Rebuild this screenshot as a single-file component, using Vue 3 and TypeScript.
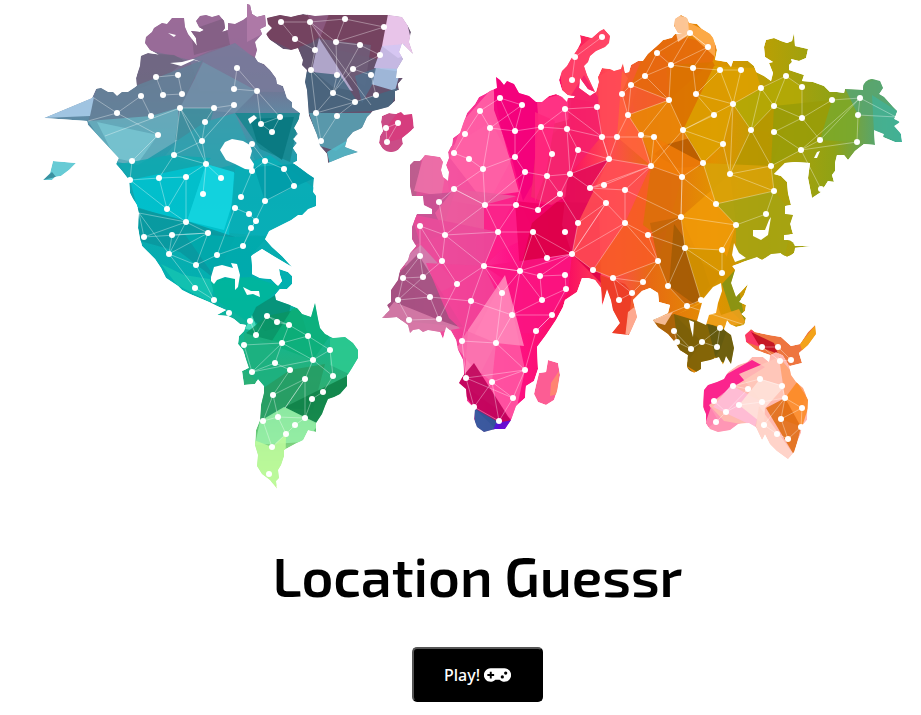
<script setup lang="ts">
interface Facet {
  fill: string
  points: string
}

interface Land {
  id: string
  fill: string
  outline: string
  facets: Facet[]
}

const lands: Land[] = [
  {
    id: 'americas',
    fill: 'url(#americas-fill)',
    outline:
      '44,118 92,98 96,89 101,88 108,92 113,92 117,96 122,92 128,92 137,86 136,78 140,66 141,56 148,53 155,54 159,55 150,50 145,43 146,37 152,32 154,28 162,23 167,24 172,18 184,18 185,27 188,34 194,42 197,46 196,38 191,31 200,32 204,30 199,27 196,21 200,16 206,15 212,17 219,15 224,21 225,28 222,32 228,30 228,23 235,24 243,20 247,17 247,4 250,5 252,14 257,17 265,15 266,26 260,29 262,34 255,42 257,50 255,57 258,62 264,64 270,70 276,78 277,84 283,86 287,98 292,102 292,107 300,113 299,119 294,128 298,134 293,139 297,143 293,148 297,154 297,161 293,163 300,168 308,174 314,178 313,192 316,196 316,206 308,209 305,212 302,215 298,215 291,220 277,227 269,231 265,239 272,247 282,256 292,267 275,257 262,249 251,256 252,266 252,274 260,278 271,279 278,286 282,281 280,275 279,269 288,272 292,276 292,284 287,289 280,289 275,295 276,300 290,305 297,308 302,314 311,317 315,303 318,319 320,328 325,334 333,338 345,337 353,343 358,350 358,358 352,368 347,376 347,386 340,394 334,397 328,399 325,406 322,414 316,423 316,432 308,430 303,440 295,444 284,450 284,456 281,465 278,470 279,478 276,481 277,489 270,480 262,474 257,466 258,455 255,445 256,430 260,420 261,405 264,393 264,386 258,379 255,384 244,385 242,371 249,368 247,362 243,350 238,344 239,336 244,331 246,325 240,324 234,319 228,316 217,315 226,310 217,306 209,302 190,294 182,290 178,286 166,278 161,268 155,259 148,252 142,246 140,238 138,228 139,213 137,205 133,199 130,193 129,180 122,171 116,164 119,158 88,125 87,121',
    facets: [
      { fill: '#9b6b98', points: '140,10 250,0 270,10 262,60 225,44 190,60 140,48' },
      { fill: '#825f83', points: '191,30 225,18 230,45 194,55' },
      { fill: '#b07ba8', points: '247,0 270,10 270,30 247,42' },
      { fill: '#6e6681', points: '140,53 174,55 185,61 162,80 135,90' },
      { fill: '#777b9b', points: '190,60 235,43 270,70 285,92 200,91' },
      { fill: '#647f97', points: '135,86 203,60 180,108 145,125 88,122 97,88' },
      { fill: '#7190a8', points: '203,62 257,91 235,113 180,108' },
      { fill: '#a9cdea', points: '44,118 94,97 90,116' },
      { fill: '#67adbd', points: '88,121 151,116 178,108 178,140 138,165 115,162' },
      { fill: '#78c4d0', points: '97,122 158,135 138,163 115,158' },
      { fill: '#3d8e9d', points: '180,108 214,108 205,141 175,140' },
      { fill: '#32a0ae', points: '205,122 235,113 255,160 210,170 165,156 178,140' },
      { fill: '#16888f', points: '235,113 300,113 290,162 260,149' },
      { fill: '#08777f', points: '250,119 294,117 282,160 257,142' },
      { fill: '#10a8b0', points: '120,164 170,155 211,158 188,177 130,180' },
      { fill: '#00c3cf', points: '130,180 206,164 235,173 229,237 137,207' },
      { fill: '#15d5e0', points: '206,164 234,172 233,201 224,230 187,221' },
      { fill: '#08aeb7', points: '235,168 270,155 317,190 315,210 267,236 229,233' },
      { fill: '#009ca8', points: '254,167 295,164 315,178 294,187 265,201' },
      { fill: '#09979e', points: '137,208 187,221 235,237 215,279 180,252 140,241' },
      { fill: '#00aaac', points: '184,233 235,237 268,236 252,254 252,280 216,279' },
      { fill: '#14c3b0', points: '161,264 184,275 216,280 210,302 177,285' },
      { fill: '#00b59b', points: '210,279 252,277 280,286 248,322 216,300' },
      { fill: '#078f75', points: '256,307 277,294 291,303 287,325 265,331 251,318' },
      { fill: '#53e0c4', points: '245,329 252,315 258,331' },
      { fill: '#0a9464', points: '267,316 300,309 308,336 275,348 246,333' },
      { fill: '#0caf7a', points: '292,309 317,302 329,337 313,360 270,344' },
      { fill: '#2cca90', points: '330,338 365,335 355,377 330,365' },
      { fill: '#1cb080', points: '244,333 282,343 275,364 305,379 273,395 246,372' },
      { fill: '#279c63', points: '262,389 290,370 325,364 313,410 285,408 260,422' },
      { fill: '#0f8248', points: '285,407 347,376 348,390 316,424' },
      { fill: '#97f0a8', points: '260,421 284,407 319,424 305,442 255,445' },
      { fill: '#bdfb9c', points: '254,440 272,447 286,434 285,490 255,475' }
    ]
  },
  {
    id: 'aleutian',
    fill: '#67cbd5',
    outline: '43,180 50,173 53,161 76,163 69,170 61,176 55,177 52,180',
    facets: [{ fill: '#348998', points: '43,180 52,172 56,177' }]
  },
  {
    id: 'greenland',
    fill: '#65526e',
    outline:
      '267,18 280,15 291,17 303,14 315,16 330,15 388,15 402,17 408,26 411,32 409,42 413,54 402,43 399,52 403,59 397,69 396,78 403,78 398,84 399,90 395,91 395,101 388,107 373,111 367,117 362,128 353,132 347,139 345,147 358,152 345,156 328,163 327,154 320,146 317,135 309,116 307,90 305,82 307,70 302,65 303,60 298,48 291,50 283,49 276,44 270,40 266,34 272,28 268,24',
    facets: [
      { fill: '#76415e', points: '265,14 310,15 319,37 298,53 267,38' },
      { fill: '#8e5880', points: '307,14 330,15 320,39' },
      { fill: '#77415f', points: '329,14 390,14 381,60 330,48 320,38' },
      { fill: '#61546f', points: '299,47 320,40 315,72 301,70' },
      { fill: '#705d79', points: '320,39 371,45 365,86 340,72' },
      { fill: '#b9b0d6', points: '319,38 337,66 353,91 333,87 312,70' },
      { fill: '#fbd4fa', points: '388,14 406,18 414,53 398,58 382,46' },
      { fill: '#d3c6f2', points: '382,46 405,44 402,72 374,68' },
      { fill: '#a6c4e6', points: '375,68 401,69 395,91 371,84' },
      { fill: '#47667f', points: '302,71 340,75 357,101 398,88 390,110 307,114' },
      { fill: '#526f8d', points: '355,76 376,68 372,85 362,103' },
      { fill: '#58a2b4', points: '309,113 376,113 350,140 336,151 320,146' },
      { fill: '#53bccb', points: '327,152 353,137 360,153 330,165' }
    ]
  },
  {
    id: 'iceland',
    fill: '#cb4c87',
    outline:
      '382,116 389,113 396,114 401,112 404,115 412,114 414,128 407,134 402,138 403,144 398,150 391,152 383,149 379,143 380,136 383,131 381,122',
    facets: [{ fill: '#d73b7d', points: '386,128 398,112 416,113 410,137 387,142' }]
  },
  {
    id: 'old-world',
    fill: 'url(#old-world-fill)',
    outline:
      '410,165 414,161 420,161 425,155 440,157 443,162 441,170 443,177 448,181 449,172 446,165 449,158 448,152 452,145 453,138 460,133 463,124 467,113 475,104 479,97 485,94 490,91 497,88 496,77 500,80 504,85 507,81 514,84 519,93 529,96 536,102 542,102 549,96 556,94 562,97 567,102 568,98 574,98 575,96 568,95 562,90 559,80 562,71 567,66 571,59 577,50 581,42 580,35 592,38 600,31 604,29 610,36 609,43 605,47 596,51 590,56 588,62 584,66 587,75 595,92 588,89 580,78 579,88 590,96 596,92 599,82 598,77 602,68 610,69 614,71 621,69 623,63 625,73 629,72 631,65 638,61 643,61 648,54 656,47 663,40 672,38 675,34 684,34 678,33 674,26 675,19 681,15 687,18 689,23 697,24 702,29 710,34 713,38 717,50 715,60 727,62 731,67 733,61 748,61 754,66 756,72 764,76 771,81 773,73 769,63 773,62 765,57 764,47 766,40 774,38 781,41 787,43 792,41 794,33 795,46 808,49 806,58 799,61 791,59 792,62 789,65 789,70 804,75 802,81 813,82 824,86 830,92 837,92 844,93 845,89 863,90 864,84 871,79 880,81 883,88 879,94 884,97 893,107 897,111 894,119 900,122 894,126 901,134 902,142 895,142 883,137 884,134 874,130 875,145 864,144 855,151 848,160 844,155 837,155 835,163 835,171 832,175 834,182 828,181 821,192 812,198 808,178 810,163 795,162 785,163 774,174 781,176 787,182 788,193 791,205 785,206 785,214 793,215 790,224 793,234 784,235 784,240 791,241 794,246 811,246 794,248 794,253 787,257 781,253 771,254 762,260 757,257 748,260 738,264 732,266 735,270 731,283 736,297 748,284 744,295 739,302 746,305 745,311 741,314 746,318 744,325 736,327 730,324 727,320 724,330 731,335 734,348 731,364 726,356 723,365 719,357 710,360 701,362 701,369 694,373 687,367 688,355 680,350 674,341 668,334 658,327 653,320 668,313 670,305 659,302 658,293 650,288 642,291 633,300 637,317 629,335 612,333 620,323 613,310 611,300 607,289 602,306 601,288 595,280 588,278 582,278 577,292 565,300 563,307 556,320 546,335 537,347 538,369 534,381 526,386 525,398 516,406 511,420 505,429 495,429 484,432 477,427 474,419 475,409 467,401 466,389 459,383 464,374 463,360 458,350 456,340 451,331 446,327 443,339 440,332 428,330 423,332 419,329 413,330 410,333 408,325 397,317 382,318 390,310 387,305 391,302 391,290 398,280 400,270 408,260 410,253 416,246 412,239 412,227 417,214 432,214 432,209 424,205 423,196 412,196 410,186',
    facets: [
      { fill: '#b95f8d', points: '408,160 421,160 416,196 408,197' },
      { fill: '#ec72a9', points: '424,154 444,158 450,198 414,191' },
      { fill: '#f455a0', points: '450,147 491,122 511,160 486,207 441,199' },
      { fill: '#ff62a6', points: '463,121 493,87 502,132 519,192 480,197 450,158' },
      { fill: '#f3007b', points: '494,76 516,80 541,101 538,174 523,201 513,163 494,110' },
      { fill: '#ff3887', points: '537,101 572,91 570,118 540,146' },
      { fill: '#f4286f', points: '538,128 571,119 570,195 551,205 531,197' },
      { fill: '#ff257d', points: '535,112 555,121 546,173 535,202' },
      { fill: '#c65393', points: '421,195 455,192 440,236 411,246 411,214' },
      { fill: '#eb5d9e', points: '454,189 516,196 498,232 445,235 435,213' },
      { fill: '#fd1c87', points: '484,205 517,196 535,234 500,251 484,266' },
      { fill: '#f00066', points: '515,201 552,205 570,194 565,233 572,254 520,271' },
      { fill: '#dc0048', points: '532,223 557,202 599,203 601,283 572,254 544,262 520,271' },
      { fill: '#eb4b9b', points: '411,214 498,232 484,266 457,285 426,263' },
      { fill: '#d07fae', points: '421,245 457,284 430,297 407,274 404,258' },
      { fill: '#a05080', points: '418,254 463,327 384,319 394,278' },
      { fill: '#d67ca8', points: '380,319 394,302 412,309 439,320 462,328 410,337' },
      { fill: '#f14398', points: '426,263 484,266 501,302 466,334 449,318' },
      { fill: '#fb1382', points: '484,266 572,254 568,292 538,334 513,333 502,278' },
      { fill: '#ff58a3', points: '505,276 525,370 514,421 466,387 464,355' },
      { fill: '#ff86b9', points: '505,275 524,346 496,343 478,378 465,377 468,330' },
      { fill: '#fa70ae', points: '467,331 496,343 492,382 471,365 457,348' },
      { fill: '#bd0058', points: '474,363 511,421 498,431 474,408 457,383' },
      { fill: '#2060a0', points: '474,408 500,423 494,438 475,431' },
      { fill: '#5a0ce0', points: '496,423 512,420 505,433 492,433' },
      { fill: '#ff4468', points: '559,64 603,28 617,43 589,68 600,104 563,96' },
      { fill: '#f5206b', points: '568,100 584,75 598,97 601,137 570,174' },
      { fill: '#ff4958', points: '597,77 622,63 635,112 623,138 602,137' },
      { fill: '#ff633c', points: '622,71 637,89 628,115 641,135 651,166 617,137' },
      { fill: '#f45b2d', points: '622,92 634,65 665,53 669,100 628,115' },
      { fill: '#e56a0b', points: '644,54 674,35 717,45 713,61 669,100 631,85' },
      { fill: '#db7300', points: '671,65 713,62 733,104 714,115 683,130 669,100' },
      { fill: '#ffcfa8', points: '672,15 688,17 690,34 678,42' },
      { fill: '#ffad50', points: '688,22 716,36 715,57 689,33' },
      { fill: '#e98508', points: '628,115 669,100 683,130 654,166 641,135' },
      { fill: '#b75a00', points: '665,145 690,138 703,166 678,168 654,154' },
      { fill: '#f07c08', points: '654,137 703,163 682,177 651,166' },
      { fill: '#dca000', points: '714,66 755,68 761,88 733,104 723,144 703,163 683,130' },
      { fill: '#b3a806', points: '733,104 786,76 802,87 802,118 774,132 751,130' },
      { fill: '#b69600', points: '751,130 774,106 791,112 771,166 730,174' },
      { fill: '#999c08', points: '774,106 832,100 860,98 820,140 801,150 771,166' },
      { fill: '#7ba82b', points: '832,100 863,98 857,142 820,140' },
      { fill: '#59a56f', points: '845,88 884,78 900,118 858,115' },
      { fill: '#44b093', points: '872,95 897,111 902,144 874,132' },
      { fill: '#e30c58', points: '568,174 609,159 590,188 606,203 572,254 562,225' },
      { fill: '#ff4d54', points: '609,159 651,166 625,223 593,270 572,254 578,223' },
      { fill: '#f75c26', points: '625,223 651,166 682,177 658,261 613,278 593,270' },
      { fill: '#db7109', points: '651,166 682,177 681,217 658,236 643,225' },
      { fill: '#c46508', points: '681,217 702,263 722,275 701,300 687,306 668,286 658,261 650,223' },
      { fill: '#a35b05', points: '674,224 702,262 710,286 694,304 669,286' },
      { fill: '#f09a08', points: '681,217 730,174 736,225 722,273 685,248' },
      { fill: '#d7a208', points: '703,163 771,166 774,191 716,204' },
      { fill: '#a5a312', points: '716,204 774,191 794,215 785,256 736,262 736,225' },
      { fill: '#d59500', points: '685,248 722,250 736,269 722,285 701,300' },
      { fill: '#829315', points: '722,284 735,270 746,325 731,311' },
      { fill: '#ec3b24', points: '600,275 625,284 632,293 627,336 607,337' },
      { fill: '#ffb49d', points: '628,312 637,305 638,324 625,338' },
      { fill: '#a36108', points: '650,320 674,314 702,342 689,360 673,348' },
      { fill: '#766008', points: '674,314 727,330 720,350 702,375 680,362' },
      { fill: '#605911', points: '707,323 734,333 735,366 716,360' },
      { fill: '#efa11c', points: '676,315 705,300 702,323 725,327 746,323 739,309 721,315 715,297' },
      { fill: '#ffc5a5', points: '650,321 673,312 665,325' }
    ]
  },
  {
    id: 'madagascar',
    fill: '#fc5d94',
    outline:
      '548,360 558,363 560,375 557,391 554,400 546,405 538,402 534,394 536,385 539,373 546,372',
    facets: [{ fill: '#ff8b6d', points: '551,383 559,371 558,394 550,396' }]
  },
  {
    id: 'new-guinea',
    fill: '#ee753f',
    outline:
      '745,335 751,329 755,332 769,335 781,337 791,346 800,344 808,332 815,325 816,334 808,345 799,353 802,363 790,366 779,360 770,355 756,350 746,342',
    facets: [
      { fill: '#ff2f6c', points: '745,334 752,330 763,348 746,342' },
      { fill: '#c00a22', points: '751,332 774,343 778,354 760,347' },
      { fill: '#f4aa15', points: '800,344 818,322 818,334 803,353' }
    ]
  },
  {
    id: 'australia',
    fill: '#ffb9b0',
    outline:
      '704,390 708,385 717,382 724,379 728,372 738,365 747,362 752,357 763,357 769,362 770,355 776,352 783,355 789,365 791,375 796,382 803,388 808,400 807,420 802,426 801,433 798,440 794,452 788,459 777,451 770,444 765,434 762,440 756,427 749,423 738,424 730,430 718,432 710,429 706,423 706,414 703,407',
    facets: [
      { fill: '#fb0f88', points: '702,388 752,360 765,367 730,389 709,405 718,420 705,430' },
      { fill: '#ffbcd8', points: '731,385 762,402 755,427 713,407' },
      { fill: '#ff91b5', points: '711,407 724,421 758,427 735,443 703,430' },
      { fill: '#ffc7b9', points: '739,374 779,357 785,398 762,402' },
      { fill: '#ffe2d9', points: '739,405 760,379 785,386 765,408 764,425' },
      { fill: '#ffa26e', points: '779,357 807,390 802,408 785,398' },
      { fill: '#fc8a22', points: '785,398 797,382 810,402 802,427 781,419' },
      { fill: '#e06c12', points: '766,408 785,398 801,427 794,455' },
      { fill: '#ffd6cc', points: '759,406 794,455 786,462 755,432' }
    ]
  }
]

const waters: string[] = [
  '220,150 225,142 232,139 243,141 250,145 252,151 250,158 254,164 253,170 245,169 235,164 226,160',
  '211,277 214,267 222,265 233,268 231,263 237,264 240,275 238,287 235,290 235,279 225,277 217,280 214,284 211,281',
  '243,287 251,291 259,291 260,297 253,294 247,295',
  '168,33 176,35 174,37',
  '170,63 182,62 193,59 201,62 194,60 181,66',
  '248,119 254,115 257,118 250,124',
  '703,299 713,287 721,283 722,291 718,303 716,313 709,315 706,325 697,321',
  '689,320 694,322 693,337 691,330',
  '753,230 765,230 769,220 771,217 768,235 761,240 753,236',
  '817,152 820,151 817,158 814,158',
  '734,243 739,253 746,258 735,262 732,255'
]

const nodes: string[] = [
  // North America
  '156,77 178,75 163,95 182,94 141,96 117,113 151,116 180,108 214,108 205,122 158,135 202,141 174,155 206,164 132,161 130,180 159,178 186,177 221,178 203,194 237,68 234,89 257,91 234,105 280,117 261,124 272,132 252,144 265,161 252,171 284,169 294,186 241,197 265,201',
  '167,209 235,208 249,214 256,221 251,228 186,222 144,237 172,235 208,233 169,254 217,255 243,246 196,265 195,288 214,300 229,313',
  // South America
  '250,321 267,316 277,322 289,325 244,345 256,335 282,343 308,336 330,350 252,372 275,363 290,370 313,360 305,379 333,376 273,395 312,399 323,392 263,421 278,417 295,425 305,418 286,434 272,447 269,474',
  // Greenland and Iceland
  '281,22 310,22 345,19 384,27 295,39 336,42 360,45 315,50 380,55 311,70 337,75 353,69 371,75 333,93 355,102 376,95 316,113 337,116 321,141 386,128 398,123 387,142',
  // Europe
  '500,98 522,105 480,111 490,128 515,131 465,134 454,153 469,159 483,169 515,157 541,127 565,109 567,129 552,154 578,150 525,172 547,176 570,174 454,189 439,202 485,205 516,205 538,210 560,194 420,226 445,235 498,232 533,232 565,232 578,223 572,254 547,258',
  // Africa
  '420,256 442,261 484,266 520,271 403,278 423,277 457,284 398,300 430,297 409,320 439,319 471,301 502,293 540,276 542,300 565,275 566,289 552,315 536,331 512,315 462,341 496,343 525,370 466,378 492,382 513,398 474,407 499,421',
  // Asia
  '602,37 575,57 572,80 597,107 602,137 617,137 609,159 590,188 604,185 625,190 622,94 631,85 645,76 628,115 657,53 671,65 690,33 708,47 693,68 720,70 741,70 669,100 696,94 733,104 714,115 641,135 654,137 683,130 723,144 651,166 703,163 730,174 682,177 761,88 786,76 802,87 774,106 802,118 751,130 774,132 832,100 860,98 858,115 857,142 820,140 801,150 771,166 774,191 766,214 821,189',
  '716,204 681,217 736,225 648,235 625,223 606,203 685,248 722,250 658,261 722,273 593,270 613,278 643,282 632,293 668,286 701,300 619,300 687,306 674,331 677,342 691,349 702,342 720,328 717,347',
  // Oceania
  '762,347 778,347 780,361 791,360 760,379 733,386 748,389 782,386 714,401 726,412 739,405 762,402 785,398 802,408 781,419 716,422 764,425 777,434 788,439 801,427'
]

const links: string[] = [
  '156,77 178,75 182,94 163,95 156,77',
  '94,98 117,113 141,96 151,116',
  '117,113 158,135 132,161',
  '88,121 117,113',
  '105,136 180,108 214,108 205,122 202,141 180,108 174,155 202,141 206,164 174,155 159,178',
  '180,108 206,164 221,178',
  '214,108 234,105 202,141',
  '237,68 234,89 257,91 237,68',
  '257,91 280,117 261,124 257,91',
  '261,124 272,132 280,117',
  '252,144 265,161 284,169 294,186 265,201 265,161 252,171 241,197',
  '132,161 130,180 159,178 186,177 167,209 130,180',
  '159,178 167,209 186,222 186,177 206,164 203,194',
  '139,213 186,222 208,233 144,237 139,213 169,254 208,233 196,265 169,254 172,235 208,233',
  '144,237 186,222 169,254 195,288 214,300 196,265 217,255 243,246 265,201',
  '217,255 235,208 249,214 256,221 251,228 243,246',
  '250,321 256,335 267,316 277,322 289,325 282,343 244,345 252,372',
  '267,316 289,325 308,336 282,343 275,363 252,372 282,343 313,360 333,376 330,350 308,336 313,360 252,372',
  '275,363 290,370 273,395 305,379 313,360 330,350',
  '305,379 285,408 305,379 305,418 312,399 323,392 333,376',
  '273,395 263,421 278,417 273,395',
  '263,421 272,447 286,434 278,417 305,418 295,425 286,434',
  '281,22 310,22 345,19 384,27 336,42 310,22 371,105',
  '281,22 295,39 315,50 310,22',
  '345,19 336,42 360,45 333,93 353,69 380,55 360,45',
  '315,50 311,70 333,93 355,102 376,95 371,75 353,69',
  '311,70 316,113 333,93 337,75 336,42',
  '316,113 355,102 337,116 321,141 316,113',
  '386,128 398,123 387,142 386,128',
  '480,111 500,98 522,105 490,128 480,111 465,134 454,153 469,159 483,169 490,128 515,131 522,105',
  '500,98 515,131 515,157 525,172 547,176 552,154 541,127 515,157 483,169 485,205 454,189 439,202',
  '515,131 541,127 565,109 567,129 541,127',
  '567,129 570,174 547,176 538,210 560,194 547,176',
  '525,172 516,205 538,210 560,194 578,223 572,254 533,232 498,232 516,205 485,205 445,235 498,232 485,205',
  '483,169 454,189 485,205 525,172',
  '439,202 445,235 420,226 442,261 445,235 484,266 498,232 520,271 533,232 547,258 572,254',
  '484,266 520,271 540,276 572,254 520,271 542,300 540,276 565,275 566,289 542,300 512,315 520,271',
  '420,226 420,256 403,278 398,300 409,320 439,319 430,297 403,278 423,277 398,300 430,297 471,301 512,315 552,315 536,331',
  '420,256 423,277 442,261 457,284 439,319',
  '484,266 471,301 462,341 496,343 502,293 484,266',
  '457,284 484,266 520,271 502,293',
  '462,341 466,378 525,370 513,398 466,378 474,407 499,421 492,382 474,407',
  '512,315 496,343 525,370 536,331 552,315 566,289',
  '525,370 492,382 513,398 499,421',
  '602,37 575,57 572,80',
  '565,109 597,107 602,137 617,137 628,115 622,94 631,85 645,76 671,65 657,53 645,76 669,100 631,85 628,115 669,100 671,65 708,47 690,33 657,53',
  '671,65 690,33 708,47 693,68 720,70 741,70 733,104 761,88 786,76 802,87 802,118 774,106 761,88 751,130 774,106 786,76',
  '671,65 693,68 696,94 720,70 733,104 696,94 714,115 683,130 733,104 751,130 730,174 733,104 723,144 730,174',
  '669,100 641,135 654,137 651,166 682,177 654,137 617,137 609,159 602,137 565,109',
  '669,100 683,130 651,166 641,135 628,115',
  '683,130 723,144 703,163 683,130 682,177 703,163 716,204 774,191 730,174',
  '567,129 602,137 609,159 578,150 567,129',
  '578,150 570,174 609,159 590,188 570,174 560,194',
  '609,159 651,166 604,185 590,188 606,203 578,223',
  '651,166 590,188 625,190 651,166',
  '625,190 681,217 682,177',
  '606,203 572,254 625,223 593,270 572,254 606,203 625,223 658,261 613,278 632,293 643,282 658,261 648,235 685,248 668,286 658,261',
  '625,190 625,223 648,235 681,217 736,225 716,204 682,177 681,217 685,248 722,250 736,225 766,214 774,191 771,166 801,150 774,132 802,118 832,100 860,98 801,150 857,142 858,115 860,98 896,117',
  '802,118 820,140 801,150 821,189 834,181',
  '820,140 860,98',
  '858,115 897,117',
  '751,130 771,166 730,174',
  '685,248 722,273 722,250',
  '685,248 701,300 687,306 668,286',
  '593,270 613,278 619,300 632,293',
  '613,278 643,282',
  '674,331 677,342 691,349 674,331',
  '691,349 702,342 720,328 717,347 702,342',
  '653,320 687,306 745,325',
  '762,347 778,347 791,360 780,361 762,347',
  '760,379 733,386 748,389 726,412 714,401 733,386',
  '716,422 726,412 739,405 762,402 785,398 782,386 760,379',
  '785,398 802,408 781,419 785,398 764,425 777,434 788,439 781,419',
  '802,408 801,427 788,439'
]

const points = nodes.flatMap((group) =>
  group.split(' ').map((pair) => {
    const [x, y] = pair.split(',').map(Number)
    return { x, y }
  })
)

function play(): void {
  window.location.hash = 'play'
}
</script>

<template>
  <main class="home">
    <svg class="world" viewBox="0 0 921 500" role="img" aria-labelledby="title">
      <defs>
        <linearGradient id="americas-fill" gradientUnits="userSpaceOnUse" x1="0" y1="0" x2="0" y2="490">
          <stop offset="0" stop-color="#9a6a98" />
          <stop offset="0.16" stop-color="#75708f" />
          <stop offset="0.24" stop-color="#5f8aa5" />
          <stop offset="0.34" stop-color="#14a3af" />
          <stop offset="0.58" stop-color="#02b0b0" />
          <stop offset="0.7" stop-color="#16b58b" />
          <stop offset="0.82" stop-color="#35ad6c" />
          <stop offset="1" stop-color="#c8f890" />
        </linearGradient>
        <linearGradient id="old-world-fill" gradientUnits="userSpaceOnUse" x1="380" y1="0" x2="902" y2="0">
          <stop offset="0" stop-color="#b95f91" />
          <stop offset="0.12" stop-color="#f04c9c" />
          <stop offset="0.25" stop-color="#ff1287" />
          <stop offset="0.36" stop-color="#f90d63" />
          <stop offset="0.44" stop-color="#ff4b50" />
          <stop offset="0.52" stop-color="#e76b12" />
          <stop offset="0.64" stop-color="#e29200" />
          <stop offset="0.75" stop-color="#b5a006" />
          <stop offset="0.87" stop-color="#8fa215" />
          <stop offset="0.95" stop-color="#58a56c" />
          <stop offset="1" stop-color="#32b09f" />
        </linearGradient>
        <clipPath v-for="land in lands" :id="`clip-${land.id}`" :key="land.id">
          <polygon :points="land.outline" />
        </clipPath>
      </defs>

      <circle cx="872" cy="88" r="9" fill="#55a569" />
      <circle cx="787" cy="248" r="8" fill="#a3a212" />
      <circle cx="694" cy="365" r="7" fill="#7d5f08" />
      <circle cx="391" cy="141" r="11" fill="#c84d87" />

      <g v-for="land in lands" :key="land.id" :clip-path="`url(#clip-${land.id})`">
        <polygon :points="land.outline" :fill="land.fill" />
        <polygon
          v-for="(facet, i) in land.facets"
          :key="i"
          class="facet"
          :points="facet.points"
          :fill="facet.fill"
        />
      </g>

      <polygon v-for="(water, i) in waters" :key="`w${i}`" :points="water" fill="#fff" />
      <polyline v-for="(link, i) in links" :key="`l${i}`" class="link" :points="link" />
      <circle v-for="(p, i) in points" :key="`n${i}`" class="node" :cx="p.x" :cy="p.y" r="3" />
    </svg>

    <div class="intro">
      <h1 id="title" class="title">Location Guessr</h1>
      <button class="play" type="button" @click="play">
        <span>Play!</span>
        <svg class="gamepad" viewBox="0 0 28 14" aria-hidden="true">
          <path fill="#fff" d="M7 0h14a7 7 0 1 1-4.800 12h-4.400A7 7 0 1 1 7 0Z" />
          <path d="M6 3.500h2V6h2.500v2H8v2.500H6V8H3.500V6H6Z" />
          <circle cx="19" cy="9" r="1.700" />
          <circle cx="22.500" cy="5" r="1.700" />
        </svg>
      </button>
    </div>
  </main>
</template>

<style>
body {
  margin: 0;
  background: #fff;
}
</style>

<style scoped>
.home {
  display: flex;
  flex-direction: column;
  font-family: 'Exo 2', 'Noto Sans', 'Open Sans', sans-serif;
}

.world {
  display: block;
  width: 100%;
  height: auto;
}

.facet {
  opacity: 0.88;
}

.link {
  fill: none;
  stroke: #fff;
  stroke-width: 1;
  stroke-opacity: 0.35;
}

.node {
  fill: #fff;
}

.intro {
  display: flex;
  flex-direction: column;
  align-items: center;
  gap: 36px;
  padding: 40px 0 12px 34px;
}

.title {
  margin: 0;
  color: #000;
  font-size: 55px;
  font-weight: 600;
  line-height: 71px;
  white-space: nowrap;
}

.play {
  display: flex;
  align-items: center;
  justify-content: center;
  gap: 4px;
  box-sizing: border-box;
  height: 55px;
  padding: 0 30px;
  border: 2px outset #555;
  border-radius: 5px;
  background: #000;
  color: #fff;
  font-family: 'Noto Sans', 'Open Sans', sans-serif;
  font-size: 16px;
  font-weight: 500;
  line-height: 24px;
  cursor: pointer;
}

.gamepad {
  width: 27px;
  height: 14px;
}
</style>
